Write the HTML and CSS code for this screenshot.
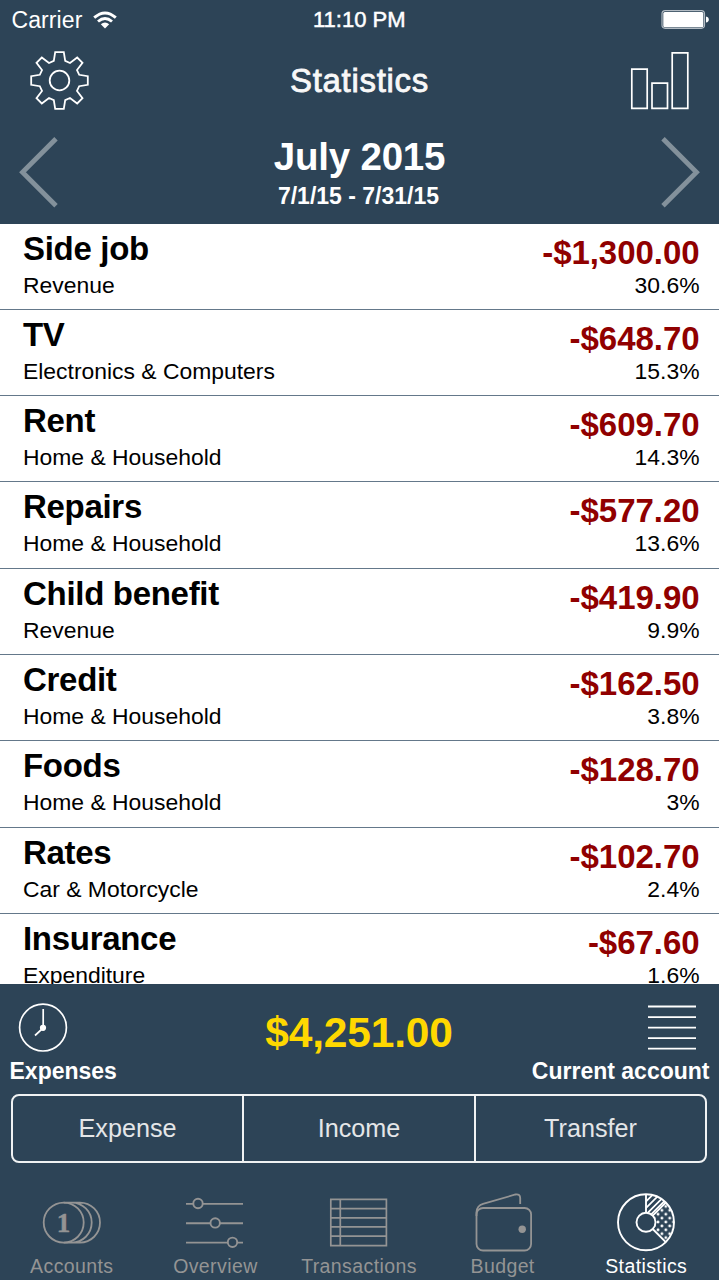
FILE: index.html
```html
<!DOCTYPE html>
<html lang="en">
<head>
<meta charset="utf-8">
<title>Statistics</title>
<link rel="stylesheet" href="styles.css">
</head>
<body>
<div class="app">
  <header class="header">
    <div class="status">
      <div class="status-left"><span class="carrier">Carrier</span>
        <svg class="wifi" width="24" height="18" viewBox="94 10 24 18" fill="none" stroke="#fff" stroke-width="2.9"><path d="M95.2 16.6Q106 7.200 116.800 16.600M99 20.500Q106 14.400 113 20.500"/><path d="M101.800 23.200Q106 19.800 110.200 23.200L106 27.400Z" fill="#fff" stroke="none"/></svg>
      </div>
      <span class="time">11:10 PM</span>
      <div class="status-right"><svg width="48" height="20" viewBox="661 10 48 20"><rect x="662" y="10.700" width="42.500" height="17.600" rx="3.200" fill="none" stroke="#b3bcc4" stroke-width="1.200"/><rect x="663.300" y="12" width="40" height="15.200" rx="1.500" fill="#fff"/><path d="M706 16.500Q708.800 17 708.800 19.500T706 22.500Z" fill="#fff"/></svg></div>
    </div>
    <div class="nav">
      <svg width="60" height="60" viewBox="-30.500 -30.500 60 60" fill="none" stroke="#fff" stroke-width="1.8"><path d="M-4.300-28.300H4.300L5.700-19.700L10.500-17.500L17.700-23L23-17.700L17.500-10.500L19.700-5.700L28.300-4.300V4.300L19.700 5.700L17.500 10.500L23 17.700L17.700 23L10.500 17.500L5.700 19.700L4.300 28.300H-4.300L-5.700 19.700L-10.500 17.500L-17.700 23L-23 17.700L-17.500 10.500L-19.700 5.700L-28.300 4.300V-4.300L-19.700-5.700L-17.500-10.500L-23-17.700L-17.700-23L-10.500-17.500L-5.700-19.700Z"/><circle r="9.800"/></svg>
      <h1 class="nav-title">Statistics</h1>
      <svg width="60" height="60" viewBox="630 50 60 60" fill="none" stroke="#fff" stroke-width="1.700"><path d="M631.800 69.200H647.200V108.400H631.800ZM652 83.200H667.500V108.400H652ZM672.200 52.800H687.800V108.400H672.200Z"/></svg>
    </div>
    <div class="period">
      <svg width="40" height="72" viewBox="18 136 40 72" fill="none" stroke="#83919b" stroke-width="4.800"><path d="M56 138.700L22.500 172.200L56 205.700"/></svg>
      <div class="period-text"><div class="month">July 2015</div><div class="range">7/1/15 - 7/31/15</div></div>
      <svg width="40" height="72" viewBox="661 136 40 72" fill="none" stroke="#83919b" stroke-width="4.800"><path d="M663 138.700L696.500 172.200L663 205.700"/></svg>
    </div>
  </header>
  <main class="list">
    <div class="row"><div><div class="name">Side job</div><div class="sub">Revenue</div></div><div class="values"><div class="amount">-$1,300.00</div><div class="sub">30.6%</div></div></div>
    <div class="row"><div><div class="name">TV</div><div class="sub">Electronics &amp; Computers</div></div><div class="values"><div class="amount">-$648.70</div><div class="sub">15.3%</div></div></div>
    <div class="row"><div><div class="name">Rent</div><div class="sub">Home &amp; Household</div></div><div class="values"><div class="amount">-$609.70</div><div class="sub">14.3%</div></div></div>
    <div class="row"><div><div class="name">Repairs</div><div class="sub">Home &amp; Household</div></div><div class="values"><div class="amount">-$577.20</div><div class="sub">13.6%</div></div></div>
    <div class="row"><div><div class="name">Child benefit</div><div class="sub">Revenue</div></div><div class="values"><div class="amount">-$419.90</div><div class="sub">9.9%</div></div></div>
    <div class="row"><div><div class="name">Credit</div><div class="sub">Home &amp; Household</div></div><div class="values"><div class="amount">-$162.50</div><div class="sub">3.8%</div></div></div>
    <div class="row"><div><div class="name">Foods</div><div class="sub">Home &amp; Household</div></div><div class="values"><div class="amount">-$128.70</div><div class="sub">3%</div></div></div>
    <div class="row"><div><div class="name">Rates</div><div class="sub">Car &amp; Motorcycle</div></div><div class="values"><div class="amount">-$102.70</div><div class="sub">2.4%</div></div></div>
    <div class="row"><div><div class="name">Insurance</div><div class="sub">Expenditure</div></div><div class="values"><div class="amount">-$67.60</div><div class="sub">1.6%</div></div></div>
  </main>
  <footer class="footer">
    <div class="summary">
      <svg width="50" height="50" viewBox="18 1002 50 50" fill="none" stroke="#fff" stroke-width="1.700"><circle cx="43" cy="1027.600" r="23.400"/><path d="M43.200 1009V1028L35 1035.500"/><circle cx="43" cy="1027.800" r="3.100" fill="#fff" stroke="none"/></svg>
      <div class="total">$4,251.00</div>
      <svg width="50" height="50" viewBox="647 1002 50 50" stroke="#fff" stroke-width="1.800"><path d="M648 1006.500H696M648 1017.100H696M648 1027.600H696M648 1038.100H696M648 1048.600H696"/></svg>
    </div>
    <div class="captions"><span>Expenses</span><span>Current account</span></div>
    <div class="segments"><div class="segment">Expense</div><div class="segment">Income</div><div class="segment">Transfer</div></div>
    <nav class="tabs">
      <div class="tab">
        <svg width="64" height="64" viewBox="40 1190 64 64" fill="none" stroke="#949494" stroke-width="1.800"><circle cx="63.700" cy="1222.600" r="20"/><path d="M63.700 1202.600H80A20 20 0 0 1 80 1242.600H63.700M71.700 1202.600A20 20 0 0 1 71.700 1242.600"/><text class="coin" x="63.700" y="1231.700">1</text></svg>
        <span>Accounts</span></div>
      <div class="tab">
        <svg width="64" height="64" viewBox="183 1190 64 64" fill="none" stroke="#949494" stroke-width="1.900"><path d="M186 1203.900H193.300M202.700 1203.900H243M186 1223.200H210.500M219.900 1223.200H243M186 1242.600H227.800M237.200 1242.600H243"/><circle cx="198" cy="1203.500" r="4.700"/><circle cx="215.200" cy="1222.900" r="4.700"/><circle cx="232.500" cy="1242.300" r="4.700"/></svg>
        <span>Overview</span></div>
      <div class="tab">
        <svg width="64" height="64" viewBox="327 1190 64 64" fill="none" stroke="#949494" stroke-width="1.700"><path d="M330.800 1199.300H386.400V1245.700H330.800ZM340.300 1199V1246M331 1208.700H386M331 1217.800H386M331 1226.900H386M331 1236.100H386"/></svg>
        <span>Transactions</span></div>
      <div class="tab">
        <svg width="64" height="64" viewBox="471 1190 64 64" fill="none" stroke="#949494" stroke-width="1.800"><rect x="476.500" y="1208" width="54.600" height="42.500" rx="6.500"/><path d="M476.500 1216V1212Q477 1205.500 483 1203.800L515.500 1194.500Q520.200 1193.700 520.200 1198V1204"/><circle cx="522.200" cy="1229.200" r="3.700" fill="#949494" stroke="none"/></svg>
        <span>Budget</span></div>
      <div class="tab tab-active">
        <svg width="64" height="64" viewBox="614 1190 64 64" fill="none" stroke="#fff" stroke-width="1.900">
          <defs>
            <pattern id="dots" width="7.800" height="7.800" patternUnits="userSpaceOnUse" x="656" y="1204.500"><g fill="#fff" stroke="none"><circle cx="2" cy="2" r="1.450"/><circle cx="5.900" cy="5.900" r="1.450"/></g></pattern>
            <clipPath id="wedge"><path d="M646 1212.800V1194.300A28 28 0 0 1 665.800 1202.500L652.700 1215.600A9.500 9.500 0 0 0 646 1212.800Z"/></clipPath>
          </defs>
          <path d="M640 1207.500L660 1187.500M640 1214L665 1189M643 1217.500L668 1192.500M647.500 1218L672 1193.500" stroke-width="1.700" clip-path="url(#wedge)"/>
          <path d="M665.800 1202.500A28 28 0 0 1 665.800 1242.100L652.700 1229A9.500 9.500 0 0 0 652.700 1215.600Z" fill="url(#dots)" stroke="none"/>
          <circle cx="646" cy="1222.300" r="28"/><circle cx="646" cy="1222.300" r="9.500"/><path d="M646 1194V1213M652.700 1215.600L665.800 1202.500M652.700 1229L665.800 1242.100"/></svg>
        <span>Statistics</span></div>
    </nav>
  </footer>
</div>
</body>
</html>
```
FILE: styles.css
```css
* { box-sizing: border-box; }
body { margin: 0; background: #fff; font-family: "Liberation Sans", Arial, sans-serif; }
svg { display: block; flex: none; }
.app { width: 719px; height: 1280px; display: flex; flex-direction: column; overflow: hidden; }
.header { height: 224px; flex: none; background: #2d4457; color: #fff; }
.status { height: 40px; display: grid; grid-template-columns: 1fr auto 1fr; align-items: center; padding: 0 10px 0 11.500px; font-size: 23px; line-height: 40px; }
.status-left { display: flex; align-items: center; gap: 11px; }
.carrier { letter-spacing: 0.1px; }
.time { font-size: 22px; -webkit-text-stroke: 0.5px #fff; margin-right: 2px; }
.status-right { display: flex; justify-content: flex-end; }
.nav { height: 83px; display: flex; justify-content: space-between; padding: 10px 29px 0; }
.nav-title { margin: 0; font-size: 33px; font-weight: 400; line-height: 62px; letter-spacing: 0.7px; color: #f8f8f8; -webkit-text-stroke: 0.8px #f8f8f8; }
.period { display: flex; justify-content: space-between; padding: 13px 18px 0; }
.period-text { text-align: center; font-weight: 700; }
.month { font-size: 38.5px; line-height: 42px; letter-spacing: -0.2px; }
.range { font-size: 23px; line-height: 26px; margin: 5px 2px 0 0; }
.list { height: 760px; flex: none; overflow: hidden; }
.row { height: 86.3px; display: flex; justify-content: space-between; padding: 5px 19.500px 0 23px; border-bottom: 1px solid #64788a; color: #000; }
.row:first-child { height: 85.8px; }
.name { font-size: 33px; font-weight: 700; line-height: 40px; letter-spacing: -0.300px; }
.sub { font-size: 22.900px; line-height: 26px; margin-top: 3px; }
.values { text-align: right; padding-top: 4px; }
.amount { font-size: 33px; font-weight: 700; line-height: 39px; color: #900000; letter-spacing: -0.050px; }
.values .sub { margin-top: 0; }
.footer { height: 296px; flex: none; background: #2d4457; color: #fff; }
.summary { height: 74px; display: flex; justify-content: space-between; padding: 18px 22px 0 18px; }
.total { font-size: 42.500px; font-weight: 700; line-height: 62px; letter-spacing: -0.200px; margin-left: 3px; color: #ffd800; }
.captions { height: 36px; display: flex; justify-content: space-between; padding: 0 9.500px; font-size: 23px; font-weight: 700; line-height: 27px; }
.segments { height: 69px; margin: 0 12px 0 11px; display: grid; grid-template-columns: 229px 232px 1fr; border: 2px solid #f0f2f3; border-radius: 8px; }
.segment { text-align: center; font-size: 25.200px; line-height: 65px; color: #e4e6e8; }
.segment + .segment { border-left: 2px solid #f0f2f3; }
.tabs { display: grid; grid-template-columns: repeat(5, 1fr); padding: 27px 1px 0 0; }
.tab { display: flex; flex-direction: column; align-items: center; color: #949494; font-size: 19.500px; line-height: 25px; letter-spacing: 0.4px; }
.tab-active { color: #fff; }
.coin { font: 700 27px "Liberation Serif", serif; fill: #949494; stroke: #949494; stroke-width: 0.5px; text-anchor: middle; }
```
